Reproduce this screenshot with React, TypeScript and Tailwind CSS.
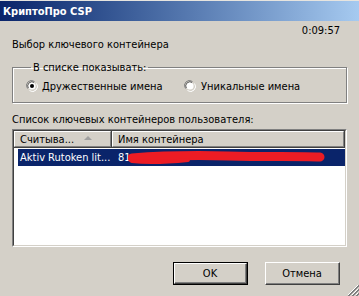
import React from "react";

function Radio({ checked }: { checked: boolean }) {
  return (
    <svg width="12" height="12" viewBox="0 0 12 12" className="shrink-0">
      <path d="M1.5 8.5 A5 5 0 0 1 8.5 1.5" stroke="#808080" fill="none" strokeWidth="1" />
      <path d="M2.5 8 A4 4 0 0 1 8 2.5" stroke="#404040" fill="none" strokeWidth="1" />
      <path d="M3.5 10.5 A5 5 0 0 0 10.5 3.5" stroke="#ffffff" fill="none" strokeWidth="1" />
      <path d="M4 9.5 A4 4 0 0 0 9.5 4" stroke="#d4d0c8" fill="none" strokeWidth="1" />
      <circle cx="6" cy="6" r="3.6" fill="#ffffff" />
      {checked && <circle cx="6" cy="6" r="2" fill="#000000" />}
    </svg>
  );
}

export default function App() {
  return (
    <div className="w-[359px] h-[296px] bg-[#d4d0c8] relative overflow-hidden text-[11px] leading-[13px] text-black font-['DejaVu_Sans_Condensed','Liberation_Sans',sans-serif]">
      <div className="h-[1px] bg-[#e6e4df]" />
      <div className="h-[20px] bg-gradient-to-r from-[#0a246a] to-[#a6caf0] flex items-center pl-[3px] text-white font-bold">
        КриптоПро CSP
      </div>
      <div className="mt-[3px] h-[13px] flex justify-end pr-[19px]">0:09:57</div>
      <div className="mt-[1px] h-[13px] pl-[12px]">Выбор ключевого контейнера</div>

      <fieldset className="mt-[10px] ml-[12px] w-[335px] border border-[#808080] shadow-[inset_1px_1px_0_#ffffff,1px_1px_0_#ffffff] pl-[13px] pt-[6px] pb-[10px]">
        <legend className="ml-[5px] px-[2px] leading-[13px]">В списке показывать:</legend>
        <div className="flex items-center h-[12px]">
          <div className="flex items-center gap-[4px] w-[158px]">
            <Radio checked />
            <span>Дружественные имена</span>
          </div>
          <div className="flex items-center gap-[5px]">
            <Radio checked={false} />
            <span>Уникальные имена</span>
          </div>
        </div>
      </fieldset>

      <div className="mt-[10px] h-[13px] pl-[12px]">Список ключевых контейнеров пользователя:</div>

      <div className="mt-[3px] ml-[12px] w-[335px] h-[118px] border border-t-[#808080] border-l-[#808080] border-r-[#ffffff] border-b-[#ffffff]">
        <div className="h-full border border-t-[#404040] border-l-[#404040] border-r-[#d4d0c8] border-b-[#d4d0c8] bg-white flex flex-col">
          <div className="h-[17px] flex shrink-0">
            <div className="w-[98px] h-full bg-[#d4d0c8] border-r border-b border-[#404040] flex">
              <div className="flex-1 border-t border-l border-white border-r border-b border-r-[#808080] border-b-[#808080] flex items-center pl-[5px]">
                <span className="flex-1">Считыва...</span>
                <svg width="8" height="5" viewBox="0 0 8 5" className="mr-[18px] mt-[-1px]">
                  <path d="M4 0 L8 4 L0 4 Z" fill="#a0a0a0" />
                </svg>
              </div>
            </div>
            <div className="flex-1 h-full bg-[#d4d0c8] border-r border-b border-[#404040] flex">
              <div className="flex-1 border-t border-l border-white border-r border-b border-r-[#808080] border-b-[#808080] flex items-center pl-[5px]">
                Имя контейнера
              </div>
            </div>
          </div>
          <div className="mt-[1px] ml-[4px] mr-[0px] h-[17px] bg-[#0a246a] text-white flex items-center relative">
            <span className="w-[100px] pl-[2px]">Aktiv Rutoken lit...</span>
            <span>81</span>
            <svg width="200" height="17" viewBox="0 0 200 17" className="absolute left-[110px] top-0">
              <path d="M4 9 C30 7, 60 6, 100 7 S170 7, 192 8" stroke="#ec1c24" strokeWidth="9" strokeLinecap="round" fill="none" />
              <path d="M4 12 C20 14, 40 13, 60 11" stroke="#ec1c24" strokeWidth="4" strokeLinecap="round" fill="none" />
            </svg>
          </div>
        </div>
      </div>

      <div className="mt-[15px] flex justify-end pr-[19px] gap-[17px]">
        <div className="w-[75px] h-[23px] border border-black">
          <div className="h-full border border-t-white border-l-white border-r-[#404040] border-b-[#404040] flex">
            <div className="flex-1 border-r border-b border-[#808080] flex items-center justify-center">OK</div>
          </div>
        </div>
        <div className="w-[75px] h-[23px] border border-t-white border-l-white border-r-[#404040] border-b-[#404040] flex">
          <div className="flex-1 border-r border-b border-[#808080] flex items-center justify-center">Отмена</div>
        </div>
      </div>

      <svg width="12" height="12" viewBox="0 0 12 12" className="absolute right-0 bottom-0">
        <path d="M11 1 L1 11 M11 5 L5 11 M11 9 L9 11" stroke="#ffffff" strokeWidth="1" />
        <path d="M12 1 L1 12 M12 2 L2 12 M12 5 L5 12 M12 6 L6 12 M12 9 L9 12 M12 10 L10 12" stroke="#808080" strokeWidth="1" />
      </svg>
    </div>
  );
}
